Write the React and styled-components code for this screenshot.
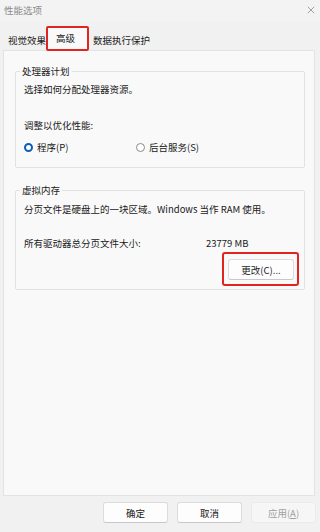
import React from "react";
import styled, { createGlobalStyle } from "styled-components";

const GlobalStyle = createGlobalStyle`
  html, body {
    margin: 0;
    padding: 0;
    background: #f1f1f1;
  }
  * {
    box-sizing: border-box;
  }
`;

function App() {
  return (
    <Window>
      <GlobalStyle />
      <TitleBar>
        <Title>性能选项</Title>
        <CloseIcon viewBox="0 0 10 10">
          <path d="M1 1 L9 9 M9 1 L1 9" />
        </CloseIcon>
      </TitleBar>
      <Body>
        <TabRow>
          <Tab first>视觉效果</Tab>
          <Tab active marked>
            高级
          </Tab>
          <Tab>数据执行保护</Tab>
        </TabRow>
        <Panel>
          <Group>
            <Legend>处理器计划</Legend>
            <Line top={4}>选择如何分配处理器资源。</Line>
            <Line top={22}>调整以优化性能:</Line>
            <RadioRow>
              <RadioItem>
                <Radio checked />
                程序(P)
              </RadioItem>
              <RadioItem>
                <Radio />
                后台服务(S)
              </RadioItem>
            </RadioRow>
          </Group>
          <Group spaced>
            <Legend>虚拟内存</Legend>
            <Line top={5}>分页文件是硬盘上的一块区域。Windows 当作 RAM 使用。</Line>
            <SizeRow>
              <span>所有驱动器总分页文件大小:</span>
              <span>23779 MB</span>
            </SizeRow>
            <ButtonRow>
              <Marked>
                <Button wide>更改(C)...</Button>
              </Marked>
            </ButtonRow>
          </Group>
        </Panel>
        <Footer>
          <Button>确定</Button>
          <Button>取消</Button>
          <Button disabled>
            应用(<u>A</u>)
          </Button>
        </Footer>
      </Body>
    </Window>
  );
}

export default App;

const Window = styled.div`
  width: 320px;
  height: 532px;
  display: flex;
  flex-direction: column;
  font-family: "Noto Sans CJK SC", "Noto Sans", sans-serif;
  font-size: 9.5px;
  color: #1a1a1a;
  background: #f1f1f1;
  overflow: hidden;
`;

const TitleBar = styled.div`
  height: 22px;
  display: flex;
  align-items: center;
  justify-content: space-between;
  padding: 0 5px 2px 4px;
  background: #f3f3f3;
`;

const Title = styled.span`
  color: #8c8c8c;
`;

const CloseIcon = styled.svg`
  width: 8px;
  height: 8px;
  stroke: #8a8a8a;
  stroke-width: 1;
  fill: none;
`;

const Body = styled.div`
  flex: 1;
  display: flex;
  flex-direction: column;
  padding: 0 5px 0 3px;
`;

const TabRow = styled.div`
  height: 28px;
  display: flex;
  align-items: flex-end;
  gap: 2px;
`;

const Tab = styled.div`
  position: relative;
  height: ${(p) => (p.active ? "24px" : "20px")};
  display: flex;
  align-items: center;
  padding: ${(p) => (p.active ? "0 14px 2px 8px" : p.first ? "0 0 0 5px" : "0 0 0 2px")};
  background: ${(p) => (p.active ? "#f9f9f9" : "transparent")};
  margin-bottom: ${(p) => (p.active ? "-1px" : "0")};
  z-index: 1;

  ${(p) =>
    p.marked &&
    `
    &::after {
      content: "";
      position: absolute;
      left: -2px;
      right: 0px;
      top: -1px;
      bottom: 0px;
      border: 2px solid #e0241f;
      border-radius: 2px;
    }
  `}
`;

const Panel = styled.div`
  height: 446px;
  background: #f9f9f9;
  border: 1px solid #e3e3e3;
  padding: 13px 9px 0 11px;
`;

const Group = styled.fieldset`
  margin: ${(p) => (p.spaced ? "15px 0 0" : "0")};
  padding: 0 0 ${(p) => (p.spaced ? "9px" : "13px")} 8px;
  border: 1px solid #e2e2e2;
  border-radius: 2px;
  display: flex;
  flex-direction: column;
`;

const Legend = styled.legend`
  margin-left: -4px;
  padding: 0 2px;
  line-height: 14px;
  color: #1a1a1a;
`;

const Line = styled.div`
  margin-top: ${(p) => p.top}px;
  line-height: 14px;
`;

const RadioRow = styled.div`
  margin-top: 8px;
  display: grid;
  grid-template-columns: 112px auto;
  line-height: 14px;
`;

const RadioItem = styled.label`
  display: flex;
  align-items: center;
  gap: 4px;
`;

const Radio = styled.span`
  width: 9px;
  height: 9px;
  border-radius: 50%;
  border: ${(p) => (p.checked ? "2.5px solid #0a5fb4" : "1px solid #8a8a8a")};
  background: #ffffff;
`;

const SizeRow = styled.div`
  margin-top: 20px;
  display: grid;
  grid-template-columns: 182px auto;
  line-height: 14px;
`;

const ButtonRow = styled.div`
  margin-top: 9px;
  display: flex;
  justify-content: flex-end;
  padding-right: 10px;
`;

const Marked = styled.div`
  position: relative;

  &::after {
    content: "";
    position: absolute;
    left: -6px;
    right: -5px;
    top: -7px;
    bottom: -6px;
    border: 2px solid #e0241f;
    border-radius: 3px;
  }
`;

const Button = styled.button`
  width: ${(p) => (p.wide ? "66px" : "65px")};
  height: 21px;
  padding: 0;
  font-family: inherit;
  font-size: 9.5px;
  color: ${(p) => (p.disabled ? "#a0a0a0" : "#1a1a1a")};
  background: ${(p) => (p.disabled ? "#f6f6f6" : "#fdfdfd")};
  border: 1px solid ${(p) => (p.disabled ? "#ebebeb" : "#dcdcdc")};
  border-bottom-color: ${(p) => (p.disabled ? "#ebebeb" : "#c8c8c8")};
  border-radius: 3px;

  u {
    text-decoration: underline;
  }
`;

const Footer = styled.div`
  display: flex;
  justify-content: flex-end;
  gap: 9px;
  padding: 6px 0 0;
  margin-right: -1px;
`;
